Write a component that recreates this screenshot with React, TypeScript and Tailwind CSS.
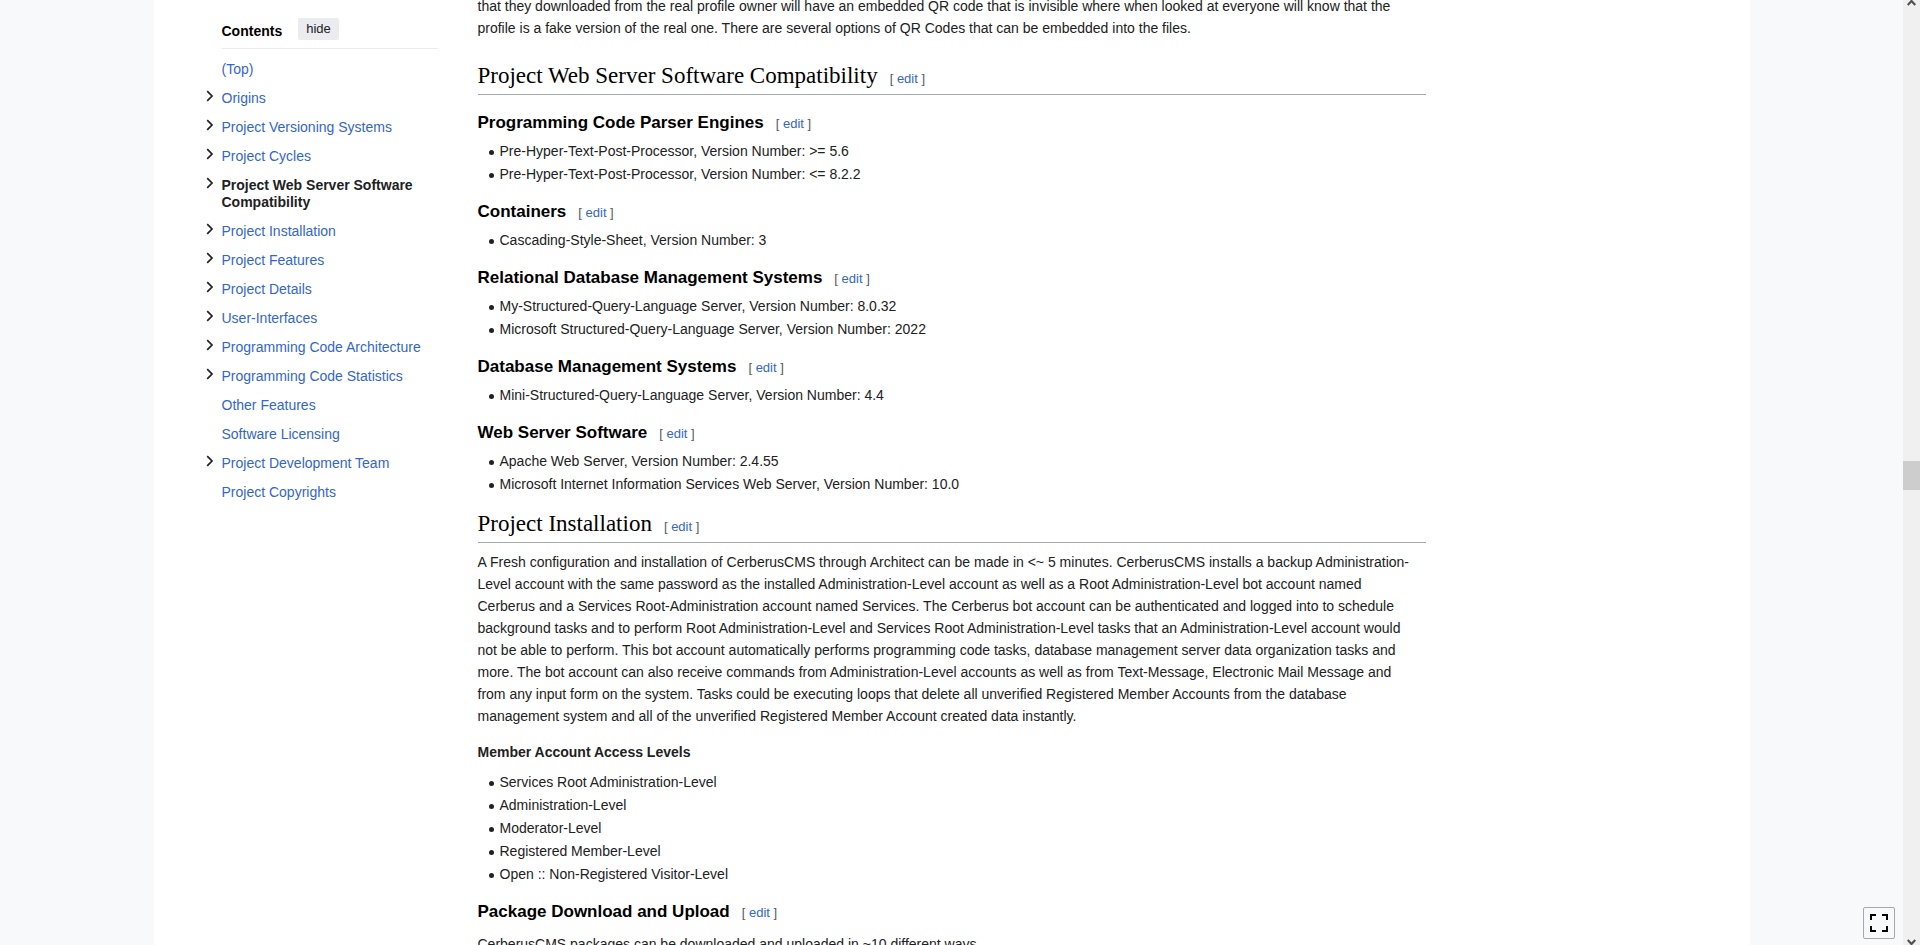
import React, { type ReactNode } from "react";

type TocEntry = { label: string; expandable?: boolean; active?: boolean };

const toc: TocEntry[] = [
  { label: "(Top)" },
  { label: "Origins", expandable: true },
  { label: "Project Versioning Systems", expandable: true },
  { label: "Project Cycles", expandable: true },
  { label: "Project Web Server Software Compatibility", expandable: true, active: true },
  { label: "Project Installation", expandable: true },
  { label: "Project Features", expandable: true },
  { label: "Project Details", expandable: true },
  { label: "User-Interfaces", expandable: true },
  { label: "Programming Code Architecture", expandable: true },
  { label: "Programming Code Statistics", expandable: true },
  { label: "Other Features" },
  { label: "Software Licensing" },
  { label: "Project Development Team", expandable: true },
  { label: "Project Copyrights" },
];

const compatibility: { title: string; items: string[] }[] = [
  {
    title: "Programming Code Parser Engines",
    items: [
      "Pre-Hyper-Text-Post-Processor, Version Number: >= 5.6",
      "Pre-Hyper-Text-Post-Processor, Version Number: <= 8.2.2",
    ],
  },
  { title: "Containers", items: ["Cascading-Style-Sheet, Version Number: 3"] },
  {
    title: "Relational Database Management Systems",
    items: [
      "My-Structured-Query-Language Server, Version Number: 8.0.32",
      "Microsoft Structured-Query-Language Server, Version Number: 2022",
    ],
  },
  {
    title: "Database Management Systems",
    items: ["Mini-Structured-Query-Language Server, Version Number: 4.4"],
  },
  {
    title: "Web Server Software",
    items: [
      "Apache Web Server, Version Number: 2.4.55",
      "Microsoft Internet Information Services Web Server, Version Number: 10.0",
    ],
  },
];

const accessLevels = [
  "Services Root Administration-Level",
  "Administration-Level",
  "Moderator-Level",
  "Registered Member-Level",
  "Open :: Non-Registered Visitor-Level",
];

function EditLink() {
  return (
    <span className="ml-3 font-['Liberation_Sans',Arial,sans-serif] text-[13px] font-normal leading-4 text-[#54595d]">
      [ <a href="#edit" className="text-[#3366cc]">edit</a> ]
    </span>
  );
}

function SectionHeading({ children }: { children: string }) {
  return (
    <h2 className="mb-0.5 mt-[15px] border-b border-[#a2a9b1] pb-1 font-['Liberation_Serif','Times_New_Roman',serif] text-[23px] leading-7 text-black">
      {children}
      <EditLink />
    </h2>
  );
}

function SubHeading({ children }: { children: string }) {
  return (
    <h3 className="pt-[13px] text-[17px] font-bold leading-[26px] text-black">
      {children}
      <EditLink />
    </h3>
  );
}

function BulletList({ items }: { items: string[] }) {
  return (
    <ul className="mt-1">
      {items.map((item) => (
        <li key={item} className="mb-px flex items-center pl-[11px]">
          <span className="mr-1.5 mt-0.5 size-[5px] rounded-full bg-[#202122]" />
          {item}
        </li>
      ))}
    </ul>
  );
}

function Paragraph({ children }: { children: ReactNode }) {
  return <p className="mt-2 pb-2">{children}</p>;
}

function Contents() {
  return (
    <nav aria-label="Contents" className="w-[232px] shrink-0 pt-[18px]">
      <div className="ml-4 flex items-center border-b border-[#eaecf0] pb-2">
        <h2 className="pt-1 font-bold leading-[18px] text-black">Contents</h2>
        <button type="button" className="ml-4 h-[22px] rounded-xs bg-[#eaecf0] px-2 text-[13px] text-[#202122]">
          hide
        </button>
      </div>
      <ul className="mt-3 flex flex-col gap-3 leading-[17px]">
        {toc.map((entry) => (
          <li key={entry.label} className="flex items-start">
            <span className="flex w-4 shrink-0">
              {entry.expandable && (
                <button type="button" aria-label={`Toggle ${entry.label} subsection`} className="text-[#202122]">
                  <svg width="8" height="12" viewBox="0 0 8 12" fill="none" stroke="currentColor" strokeWidth="1.7">
                    <path d="M1.2 1.2 6 6 1.2 10.8" />
                  </svg>
                </button>
              )}
            </span>
            <a href="#section" className={entry.active ? "font-bold text-[#202122]" : "text-[#3366cc]"}>
              {entry.label}
            </a>
          </li>
        ))}
      </ul>
    </nav>
  );
}

function ScrollRail() {
  return (
    <div className="flex w-[17px] shrink-0 flex-col items-center bg-[#f0f0f0] text-[#505050]">
      <svg width="9" height="6" viewBox="0 0 9 6" fill="none" stroke="currentColor" strokeWidth="2.2">
        <path d="M.7 5 4.5 1 8.3 5" />
      </svg>
      <div className="grow-[454]" />
      <div className="h-[29px] w-full bg-[#cdcdcd]" />
      <div className="grow-[449]" />
      <svg width="9" height="6" viewBox="0 0 9 6" fill="none" stroke="currentColor" strokeWidth="2.2">
        <path d="M.7 1 4.5 5 8.3 1" />
      </svg>
    </div>
  );
}

export default function App() {
  return (
    <div className="flex h-screen overflow-hidden bg-[#f8f9fa] font-['Liberation_Sans',Arial,sans-serif] text-sm leading-[22px] text-[#202122]">
      <div className="relative min-w-0 grow overflow-hidden">
        <div className="mx-auto flex min-h-full max-w-[1596px] gap-10 bg-white pl-[52px] pr-[324px]">
          <Contents />
          <main className="-mt-[13px] min-w-0 grow">
            <Paragraph>
              that they downloaded from the real profile owner will have an embedded QR code that is invisible where when looked at everyone will know that the
              <br />
              profile is a fake version of the real one. There are several options of QR Codes that can be embedded into the files.
            </Paragraph>
            <SectionHeading>Project Web Server Software Compatibility</SectionHeading>
            {compatibility.map((section) => (
              <section key={section.title}>
                <SubHeading>{section.title}</SubHeading>
                <BulletList items={section.items} />
              </section>
            ))}
            <SectionHeading>Project Installation</SectionHeading>
            <Paragraph>
              {"A Fresh configuration and installation of CerberusCMS through Architect can be made in <~ 5 minutes. CerberusCMS installs a backup Administration-"}
              <br />
              Level account with the same password as the installed Administration-Level account as well as a Root Administration-Level bot account named
              <br />
              Cerberus and a Services Root-Administration account named Services. The Cerberus bot account can be authenticated and logged into to schedule
              <br />
              background tasks and to perform Root Administration-Level and Services Root Administration-Level tasks that an Administration-Level account would
              <br />
              not be able to perform. This bot account automatically performs programming code tasks, database management server data organization tasks and
              <br />
              more. The bot account can also receive commands from Administration-Level accounts as well as from Text-Message, Electronic Mail Message and
              <br />
              from any input form on the system. Tasks could be executing loops that delete all unverified Registered Member Accounts from the database
              <br />
              management system and all of the unverified Registered Member Account created data instantly.
            </Paragraph>
            <h4 className="mb-2 mt-1.5 font-bold">Member Account Access Levels</h4>
            <BulletList items={accessLevels} />
            <SubHeading>Package Download and Upload</SubHeading>
            <Paragraph>CerberusCMS packages can be downloaded and uploaded in ~10 different ways.</Paragraph>
          </main>
        </div>
        <button
          type="button"
          aria-label="Toggle limited content width"
          className="absolute bottom-1.5 right-2 flex size-8 items-center justify-center rounded-xs border border-[#a2a9b1] bg-[#f8f9fa] text-black"
        >
          <svg width="18" height="18" viewBox="0 0 18 18" fill="none" stroke="currentColor" strokeWidth="2">
            <path d="M1 6V1h5M12 1h5v5M17 12v5h-5M6 17H1v-5" />
          </svg>
        </button>
      </div>
      <ScrollRail />
    </div>
  );
}
